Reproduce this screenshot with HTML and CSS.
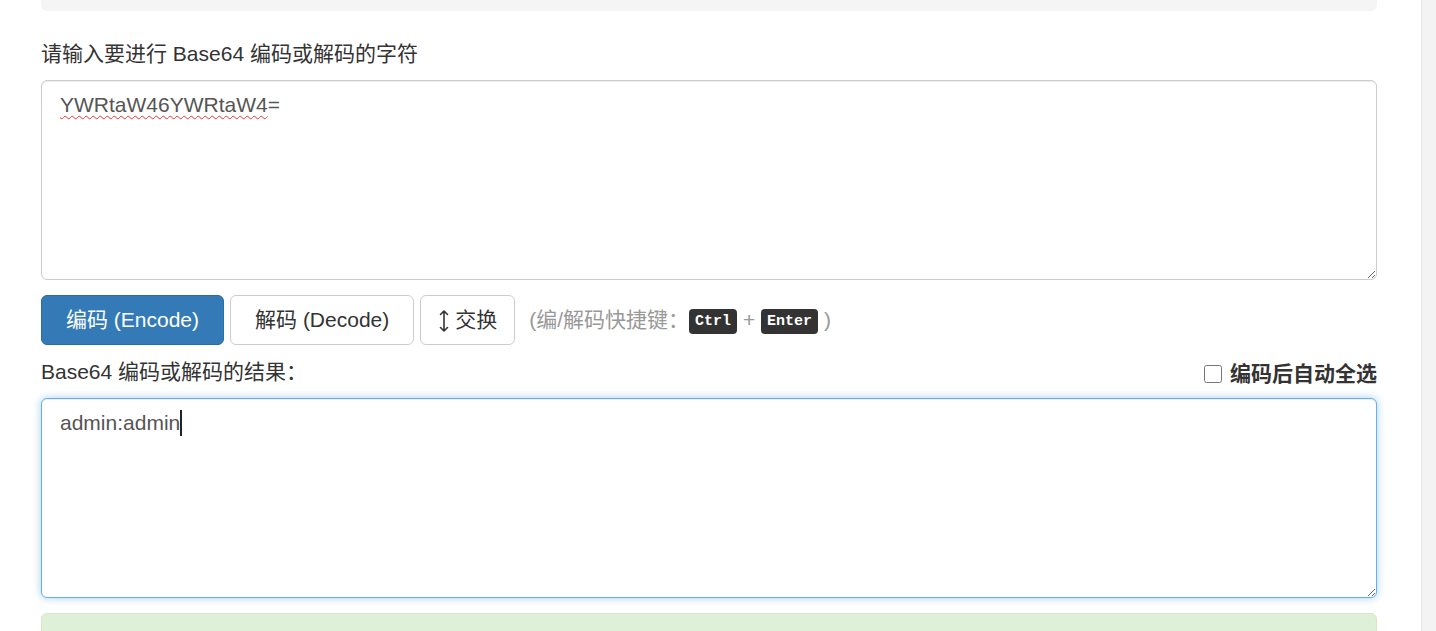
FILE: index.html
```html
<!DOCTYPE html>
<html lang="zh-CN">
<head>
  <meta charset="UTF-8" />
  <title>Base64 编码/解码</title>
  <link rel="stylesheet" href="styles.css">
</head>
<body>

<div class="page">
  <!-- Bloc du haut, coupé par le défilement -->
  <div class="well"></div>

  <label class="field-label" for="source">请输入要进行 Base64 编码或解码的字符</label>
  <div class="area-wrap">
    <textarea id="source" class="form-control" spellcheck="false">YWRtaW46YWRtaW4=</textarea>
    <span class="spell">YWRtaW46YWRtaW4</span>
  </div>

  <div class="actions">
    <button class="btn btn-primary">编码 (Encode)</button>
    <button class="btn">解码 (Decode)</button>
    <button class="btn btn-swap">
      <svg class="swap-icon" width="10" height="24" viewBox="0 0 10 24">
        <path d="M5 2 V22 M1.5 5.5 L5 2 L8.5 5.5 M1.5 18.5 L5 22 L8.5 18.5" fill="none" stroke="#333" stroke-width="1.6" stroke-linecap="round" stroke-linejoin="round"/>
      </svg>
      交换
    </button>
    <span class="hint">(编/解码快捷键：<kbd>Ctrl</kbd> + <kbd>Enter</kbd> )</span>
  </div>

  <div class="result-head">
    <label class="field-label" for="result">Base64 编码或解码的结果：</label>
    <label class="auto-select"><input type="checkbox"> 编码后自动全选</label>
  </div>
  <div class="area-wrap">
    <textarea id="result" class="form-control focused" spellcheck="false">admin:admin</textarea>
    <span class="caret">admin:admin</span>
  </div>

  <div class="alert-success"></div>
</div>

<div class="scroll-strip"></div>

</body>
</html>
```

FILE: styles.css
```css
body {
  margin: 0;
  display: flex;
  height: 631px;
  overflow: hidden;
  font-family: "Liberation Sans", "Noto Sans CJK SC", sans-serif;
  font-size: 21px;
  line-height: 30px;
  color: #333;
  background: #fff;
}
.page {
  flex: 1;
  padding: 0 44px 0 41px;
}
.scroll-strip {
  width: 14px;
  background: #f3f3f3;
  border-left: 1px solid #e6e6e6;
}
.well {
  height: 11px;
  background: #f5f5f5;
  border-radius: 0 0 6px 6px;
  margin-bottom: 28px;
}
.field-label {
  display: block;
  line-height: 30px;
  margin-bottom: 11px;
  font-weight: normal;
}
.area-wrap {
  position: relative;
}
.form-control {
  display: block;
  box-sizing: border-box;
  width: 100%;
  height: 200px;
  margin: 0;
  padding: 9px 18px;
  font-family: inherit;
  font-size: 21px;
  line-height: 30px;
  color: #555;
  background: #fff;
  border: 1px solid #ccc;
  border-radius: 6px;
  box-shadow: inset 0 1px 1px rgba(0,0,0,0.075);
  outline: none;
  resize: vertical;
}
.form-control.focused {
  border-color: #66afe9;
  box-shadow: inset 0 1px 1px rgba(0,0,0,0.075), 0 0 8px rgba(102,175,233,0.6);
}
.spell,
.caret {
  position: absolute;
  left: 19px;
  top: 10px;
  font-size: 21px;
  line-height: 30px;
  color: transparent;
  pointer-events: none;
}
.spell {
  text-decoration: underline wavy #e53935;
  text-decoration-thickness: 1px;
  text-underline-offset: 3px;
}
.caret {
  top: 12px;
  line-height: 26px;
  border-right: 2px solid #222;
}
.actions {
  display: flex;
  align-items: center;
  gap: 6px;
  margin: 15px 0 12px;
}
.btn {
  box-sizing: border-box;
  height: 50px;
  padding: 0 24px;
  font-family: inherit;
  font-size: 21px;
  line-height: 30px;
  color: #333;
  background: #fff;
  border: 1px solid #ccc;
  border-radius: 6px;
  cursor: pointer;
}
.btn-primary {
  color: #fff;
  background: #337ab7;
  border-color: #2e6da4;
}
.btn-swap {
  display: flex;
  align-items: center;
  gap: 6px;
  padding: 0 17px 0 18px;
}
.swap-icon {
  margin-top: 2px;
}
.hint {
  margin-left: 8px;
  color: #999;
}
kbd {
  display: inline-block;
  padding: 3px 6px;
  font-family: "Liberation Mono", "DejaVu Sans Mono", monospace;
  font-size: 15px;
  font-weight: bold;
  line-height: 19px;
  color: #fff;
  background: #333;
  border-radius: 4px;
  vertical-align: 2px;
}
.result-head {
  display: flex;
  justify-content: space-between;
  align-items: flex-start;
}
.auto-select {
  display: flex;
  align-items: center;
  gap: 8px;
  font-weight: bold;
  margin-top: 2px;
  cursor: pointer;
}
.auto-select input {
  width: 18px;
  height: 18px;
  margin: 0;
}
.alert-success {
  height: 60px;
  margin-top: 15px;
  background: #dff0d8;
  border: 1px solid #d6e9c6;
  border-radius: 6px;
}
```
